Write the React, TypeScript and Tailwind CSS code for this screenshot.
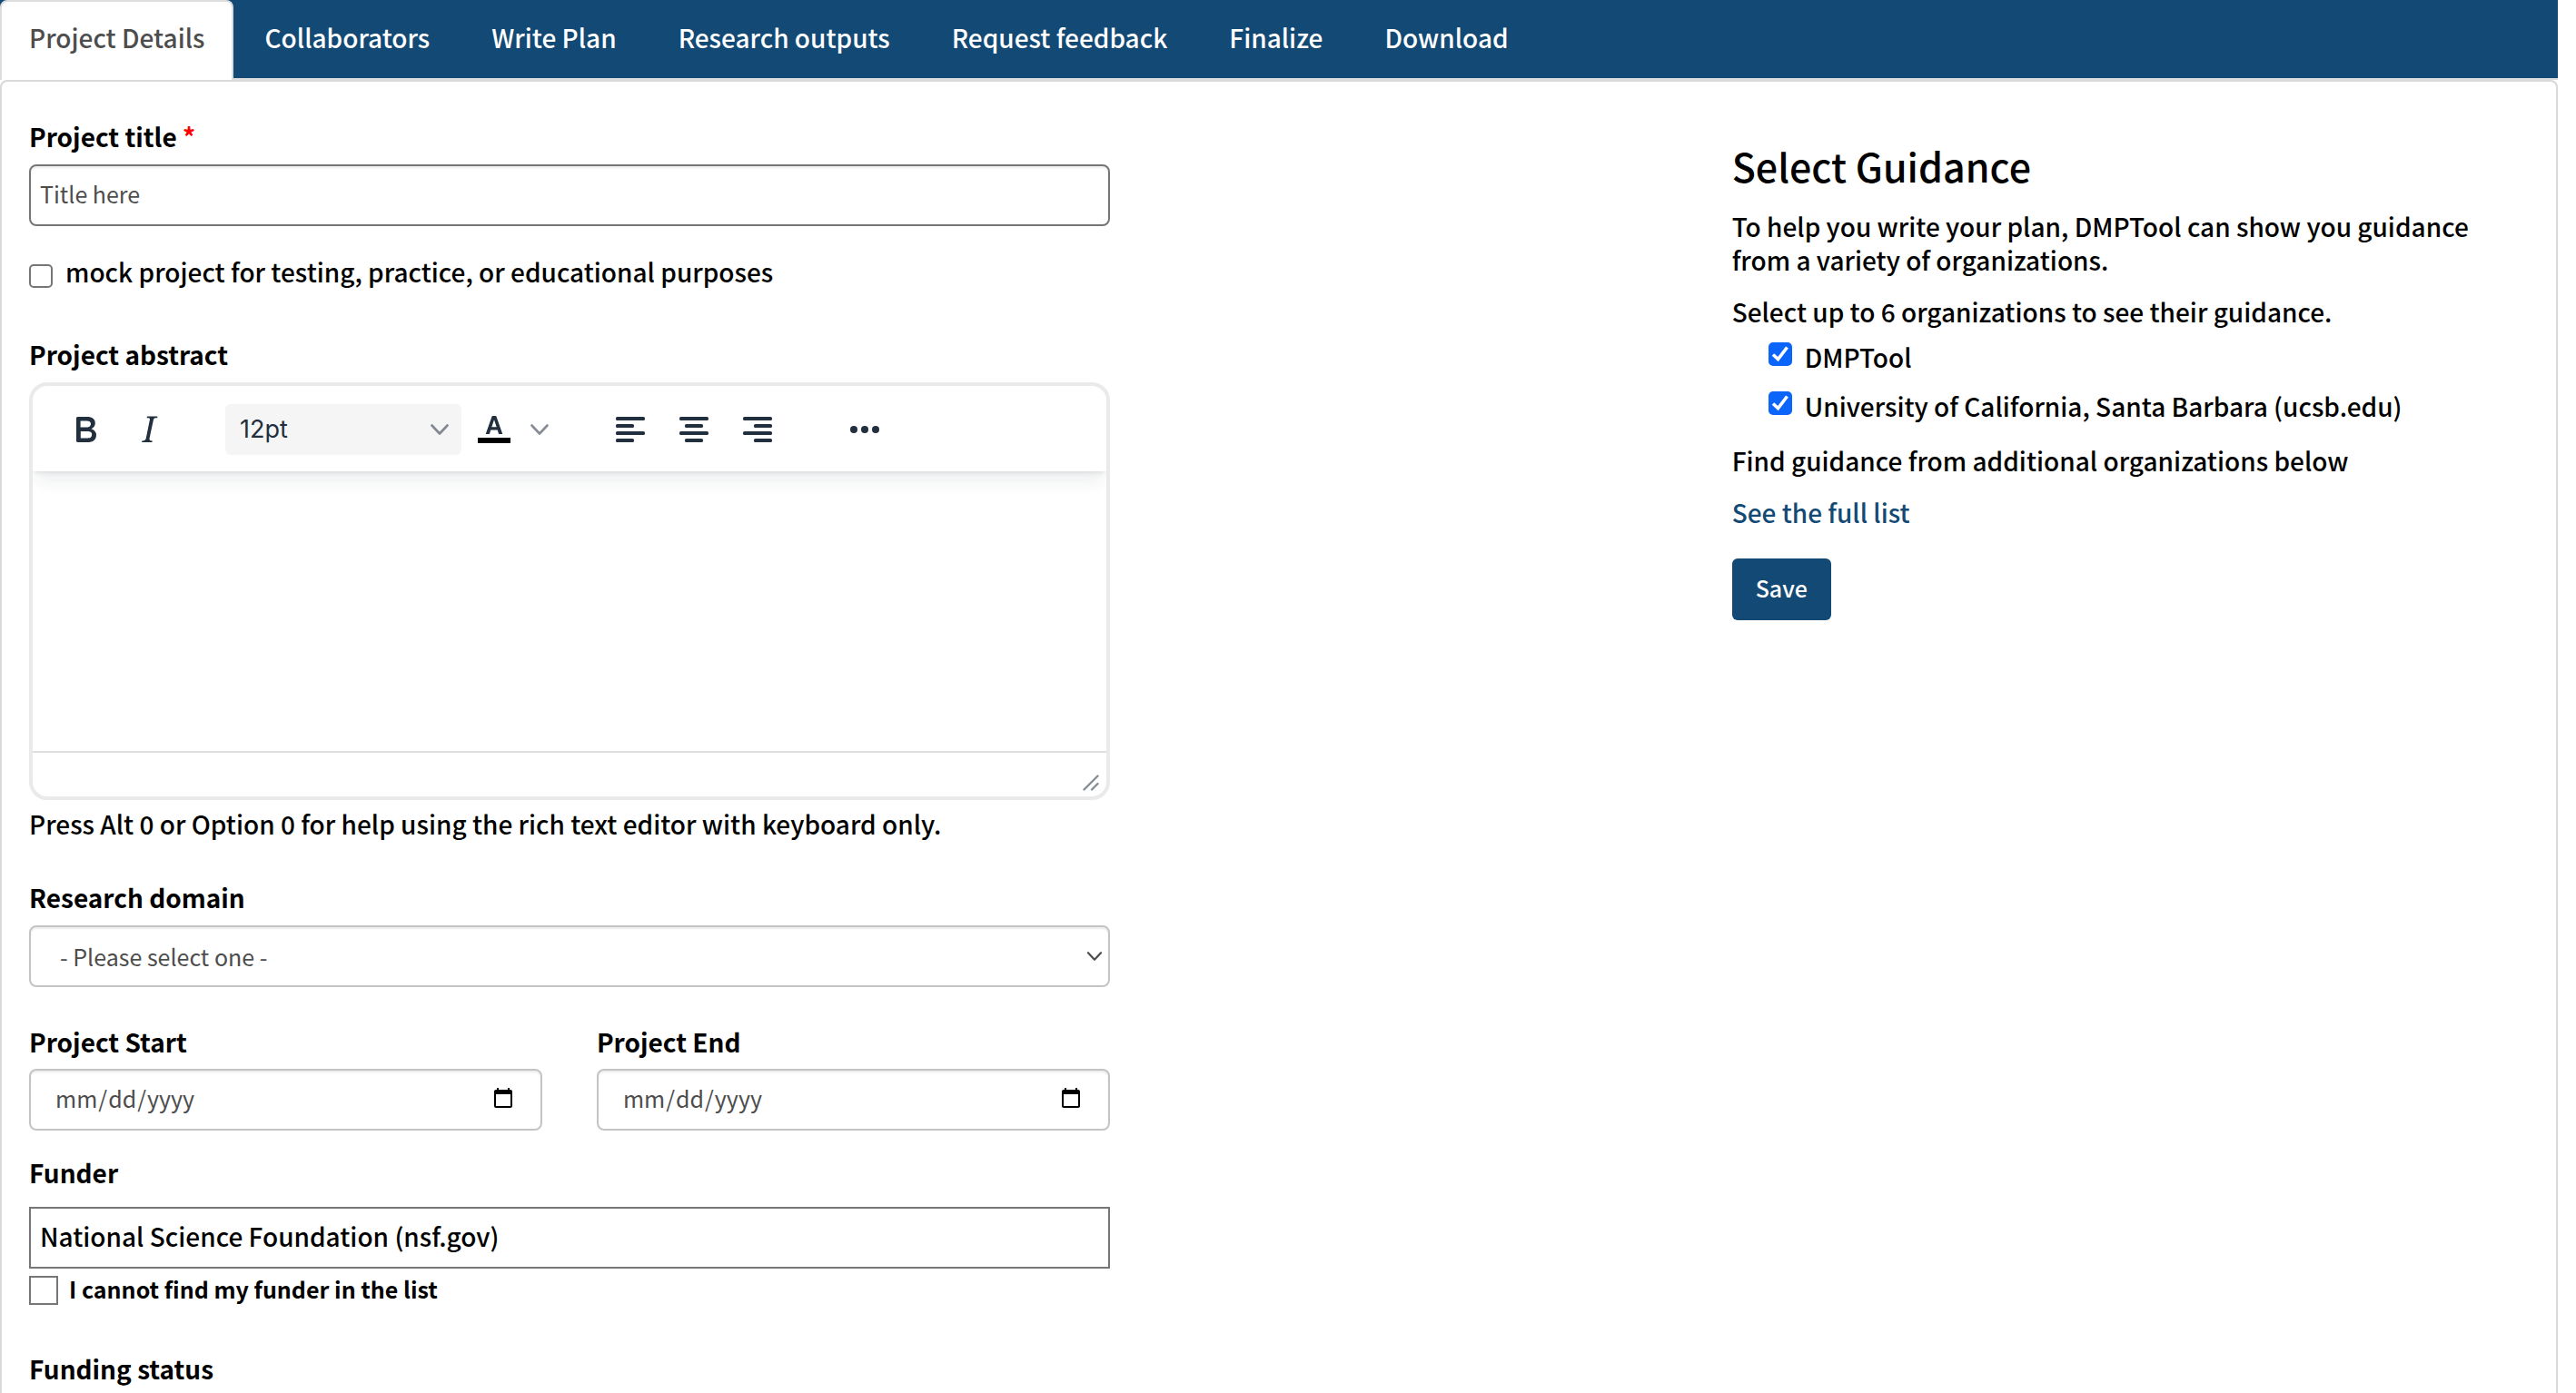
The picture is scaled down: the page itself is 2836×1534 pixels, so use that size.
import React from "react";

const tabs = ["Collaborators", "Write Plan", "Research outputs", "Request feedback", "Finalize", "Download"];

const labelClass = "block text-[28px] leading-10 font-bold";
const fieldClass =
  "block h-[68px] w-full rounded-lg border-2 border-[#c4c4c4] bg-white text-[25px] font-normal text-[#4d4d4d] shadow-[inset_0_2px_2px_rgba(0,0,0,0.075)]";

function Chevron({ className }: { className: string }) {
  return (
    <svg viewBox="0 0 20 12" fill="none" strokeLinecap="round" strokeLinejoin="round" className={className} aria-hidden="true">
      <path d="M1.5 1.5 10 10.5 18.5 1.5" stroke="currentColor" strokeWidth="2.6" />
    </svg>
  );
}

function AlignIcon({ short }: { short: number }) {
  return (
    <svg viewBox="0 0 32 28" className="h-7 w-8" fill="currentColor" aria-hidden="true">
      <rect x="0" y="0" width="32" height="4" rx="1.6" />
      <rect x={short} y="8" width="20" height="4" rx="1.6" />
      <rect x="0" y="16" width="32" height="4" rx="1.6" />
      <rect x={short} y="24" width="20" height="4" rx="1.6" />
    </svg>
  );
}

function ToolButton({ label, className, children }: { label: string; className: string; children: React.ReactNode }) {
  return (
    <button type="button" aria-label={label} className={`flex h-14 items-center justify-center ${className}`}>
      {children}
    </button>
  );
}

function Editor() {
  return (
    <div className="flex flex-col overflow-hidden rounded-[20px] border-4 border-[#eaeaea] bg-white">
      <div className="relative flex h-[94px] items-center pt-px pl-[23px] text-[#222f3e] shadow-[0_4px_4px_-2px_rgba(34,47,62,0.1),0_16px_16px_-4px_rgba(34,47,62,0.07)]">
        <ToolButton label="Bold" className="w-[70px]">
          <svg viewBox="0 0 24 24" className="size-12" aria-hidden="true">
            <path
              fill="currentColor"
              fillRule="evenodd"
              d="M7.8 19c-.3 0-.5 0-.6-.2l-.2-.5V5.7c0-.2 0-.4.2-.5l.6-.2h5c1.5 0 2.7.3 3.5 1 .7.6 1.1 1.4 1.1 2.5a3 3 0 0 1-.6 1.9c-.4.6-1 1-1.6 1.2.4.1.9.3 1.3.6s.8.7 1 1.2c.4.4.5 1 .5 1.6 0 1.3-.4 2.3-1.3 3-.8.7-2.1 1-3.8 1H7.800Zm5-8.300c.6 0 1.200-.1 1.600-.5.4-.3.6-.7.6-1.300 0-1.100-.8-1.700-2.300-1.700H9.300v3.500h3.400Zm.5 6c.7 0 1.300-.1 1.700-.4.4-.4.6-.9.6-1.500s-.2-1-.7-1.400c-.4-.3-1-.4-2-.4H9.400v3.800h4Z"
            />
          </svg>
        </ToolButton>
        <ToolButton label="Italic" className="w-[70px]">
          <svg viewBox="0 0 24 24" className="size-12" aria-hidden="true">
            <path
              fill="currentColor"
              fillRule="evenodd"
              d="m16.700 4.700-.1.900h-.3c-.6 0-1 0-1.400.3-.3.300-.4.600-.5 1.100l-2.100 9.800v.600c0 .5.4.8 1.400.8h.2l-.2.800H8l.200-.8h.2c1.100 0 1.800-.500 2-1.500l2-9.800.1-.500c0-.6-.4-.8-1.400-.8h-.3l.2-.900h5.800Z"
            />
          </svg>
        </ToolButton>
        <div className="relative ml-[49px] w-[260px]">
          <select
            aria-label="Font size"
            defaultValue="12pt"
            className="h-14 w-full appearance-none rounded-md bg-[#f5f5f5] pl-4 font-['Inter',sans-serif] text-[27px] leading-10 font-normal"
          >
            <option>12pt</option>
          </select>
          <Chevron className="pointer-events-none absolute top-[22px] right-[14px] h-3 w-5 text-[#222f3e]/55" />
        </div>
        <ToolButton label="Text color" className="ml-3 w-[48px]">
          <svg viewBox="0 0 36 32" className="h-8 w-9" aria-hidden="true">
            <path d="M0 25h36v6H0z" fill="#000" />
            <path
              fill="currentColor"
              fillRule="evenodd"
              d="M9.300 21c-.3 0-.5-.3-.4-.6L15.500 1.700c.2-.5.500-.7 1-.7h3c.5 0 .8.200 1 .7l6.600 18.700c.1.300-.1.600-.4.600h-2.900c-.4 0-.6-.2-.8-.6L21.700 16.500h-7.400l-1.300 3.900c-.1.400-.4.600-.8.600H9.300Zm6-7.700h5.400L18 5.200Z"
            />
          </svg>
        </ToolButton>
        <ToolButton label="Text color menu" className="ml-0.5 w-12">
          <Chevron className="h-3 w-5 text-[#222f3e]/55" />
        </ToolButton>
        <ToolButton label="Align left" className="ml-[41px] w-[70px]">
          <AlignIcon short={0} />
        </ToolButton>
        <ToolButton label="Align center" className="w-[70px]">
          <AlignIcon short={6} />
        </ToolButton>
        <ToolButton label="Align right" className="w-[70px]">
          <AlignIcon short={12} />
        </ToolButton>
        <ToolButton label="More" className="ml-12 w-[70px]">
          <svg viewBox="0 0 32 8" className="h-2 w-8" fill="currentColor" aria-hidden="true">
            <circle cx="4" cy="4" r="4" />
            <circle cx="16" cy="4" r="4" />
            <circle cx="28" cy="4" r="4" />
          </svg>
        </ToolButton>
      </div>
      <textarea id="abstract" className="h-[308px] w-full resize-none p-6 text-[28px] outline-none" />
      <div className="flex h-[50px] items-end justify-end border-t-2 border-[#dedede] px-2 pb-1.5 text-[#222f3e]/55">
        <svg viewBox="0 0 18 18" className="size-[18px]" fill="none" stroke="currentColor" strokeWidth="2.4" strokeLinecap="round" aria-hidden="true">
          <path d="M1.500 16.500 16.500 1.500M10 16.500 16.500 10" />
        </svg>
      </div>
    </div>
  );
}

function GuidanceOption({ id, label }: { id: string; label: string }) {
  return (
    <div className="flex h-[54px] items-start gap-[14px] pl-10">
      <span className="relative mt-1 size-[26px] shrink-0">
        <input id={id} type="checkbox" defaultChecked className="peer block size-full appearance-none rounded-[5px] border-2 border-[#767676] checked:border-[#0b65fb] checked:bg-[#0b65fb]" />
        <svg viewBox="0 0 26 26" className="pointer-events-none absolute inset-0 hidden peer-checked:block" fill="none" stroke="#fff" strokeWidth="3.600" aria-hidden="true">
          <path d="M5 13.500 10.500 18.500 20.500 5.500" />
        </svg>
      </span>
      <label htmlFor={id} className="leading-10">{label}</label>
    </div>
  );
}

export default function App() {
  return (
    <div className="flex min-h-screen flex-col bg-white pr-5 font-['Noto_Sans_CJK_SC',sans-serif] text-[28px] font-medium text-black">
      <nav className="flex h-[88px] border-b-2 border-[#ddd] bg-[#134a75] text-white">
        <a href="#details" className="-mb-[2px] mr-0.5 h-[88px] rounded-t-lg border-2 border-b-0 border-[#ddd] bg-white px-[30px] pt-[19px] leading-10 text-[#4d4d4d]">
          Project Details
        </a>
        {tabs.map((tab) => (
          <a key={tab} href="#tab" className="mr-1 px-8 pt-[21px] leading-10">
            {tab}
          </a>
        ))}
      </nav>
      <main className="flex grow rounded-t-lg border-2 border-b-0 border-[#d9d9d9] pt-10">
        <section className="w-2/3">
          <form className="w-2/3 px-[30px]">
            <label htmlFor="title" className={labelClass}>
              Project title <span className="text-[#f00]">*</span>
            </label>
            <input id="title" placeholder="Title here" className="mt-[11px] block h-[68px] w-full rounded-lg border-2 border-[#767676] px-[10px] pb-1 text-[25px] font-normal shadow-[inset_0_2px_2px_rgba(0,0,0,0.075)] placeholder:text-[#4d4d4d]" />

            <div className="mt-[30px] flex gap-[14px]">
              <input id="mock" type="checkbox" className="mt-3 size-[26px] shrink-0 appearance-none rounded-[5px] border-2 border-[#767676] bg-white" />
              <label htmlFor="mock" className="leading-10">mock project for testing, practice, or educational purposes</label>
            </div>

            <label htmlFor="abstract" className={`${labelClass} mt-[51px] mb-[11px]`}>Project abstract</label>
            <Editor />
            <p className="mt-1.5 leading-10">Press Alt 0 or Option 0 for help using the rich text editor with keyboard only.</p>

            <label htmlFor="domain" className={`${labelClass} mt-[41px] mb-[11px]`}>Research domain</label>
            <div className="relative">
              <select id="domain" className={`${fieldClass} appearance-none px-8 pt-0.5`}>
                <option>- Please select one -</option>
              </select>
              <Chevron className="pointer-events-none absolute top-[29px] right-2 h-[10px] w-[18px] text-[#4d4d4d]" />
            </div>

            <div className="mt-10 grid grid-cols-2 gap-[60px]">
              {["Project Start", "Project End"].map((name) => (
                <div key={name}>
                  <label htmlFor={name} className={`${labelClass} mb-[10px]`}>{name}</label>
                  <input
                    id={name}
                    type="date"
                    className={`${fieldClass} px-[26px] pb-0.5 [&::-webkit-calendar-picker-indicator]:size-[26px]`}
                  />
                </div>
              ))}
            </div>

            <label htmlFor="funder" className={`${labelClass} mt-[26px] mb-[18px]`}>Funder</label>
            <input id="funder" defaultValue="National Science Foundation (nsf.gov)" className="block h-[68px] w-full border-2 border-[#767676] px-[10px] pb-1" />
            <div className="mt-2 flex gap-3">
              <input id="nofunder" type="checkbox" className="size-8 shrink-0 appearance-none border-2 border-[#767676] bg-white" />
              <label htmlFor="nofunder" className="text-[25px] leading-7 font-bold">I cannot find my funder in the list</label>
            </div>

            <h3 className={`${labelClass} mt-[50px]`}>Funding status</h3>
          </form>
        </section>

        <aside className="w-1/3 px-[30px] pt-[22px]">
          <h2 className="text-[43px] leading-[60px]">Select Guidance</h2>
          <p className="mt-[19px] leading-[37px]">
            To help you write your plan, DMPTool can show you guidance from a variety of organizations.
          </p>
          <p className="mt-5 leading-[37px]">Select up to 6 organizations to see their guidance.</p>
          <div className="pt-[11px]">
            <GuidanceOption id="dmptool" label="DMPTool" />
            <GuidanceOption id="ucsb" label="University of California, Santa Barbara (ucsb.edu)" />
          </div>
          <p className="mt-2 leading-[37px]">Find guidance from additional organizations below</p>
          <a href="#list" className="mt-5 block leading-[37px] text-[#134a75]">See the full list</a>
          <button type="button" className="mt-8 block h-[68px] rounded-md bg-[#134a75] px-[26px] pb-0.5 text-[25px] text-white">Save</button>
        </aside>
      </main>
    </div>
  );
}
